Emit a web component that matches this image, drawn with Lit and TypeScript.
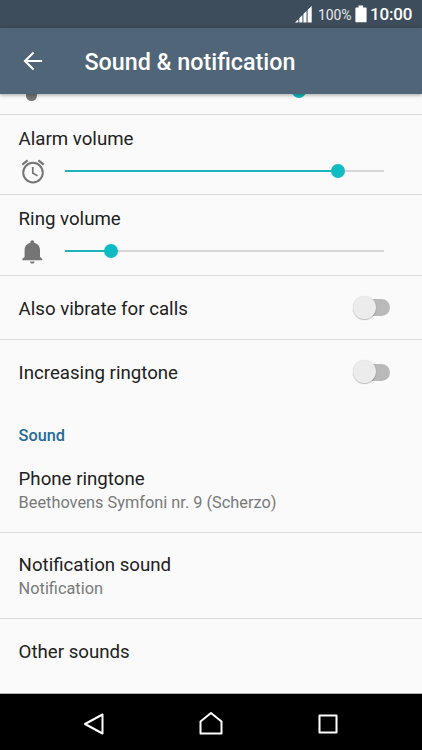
import { LitElement, html, css, svg } from "lit";
import { customElement, property } from "lit/decorators.js";

@customElement("volume-slider")
class VolumeSlider extends LitElement {
  @property({ type: Number }) value = 0;
  static styles = css`
    :host { display: block; width: 319px; height: 14px; }
    .wrap { position: relative; height: 14px; display: flex; align-items: center; }
    .track { width: 100%; height: 2px; background: #d6d6d6; }
    .fill { height: 2px; background: #1fb3bb; }
    .thumb { position: absolute; top: 0; width: 14px; height: 14px; margin-left: -7px; border-radius: 50%; background: #10bcc3; }
  `;
  render() {
    return html`<div class="wrap">
      <div class="track"><div class="fill" style="width:${this.value}%"></div></div>
      <div class="thumb" style="left:${this.value}%"></div>
    </div>`;
  }
}

@customElement("toggle-switch")
class ToggleSwitch extends LitElement {
  static styles = css`
    :host { display: block; width: 38px; height: 24px; }
    .wrap { position: relative; display: flex; align-items: center; justify-content: flex-end; height: 24px; }
    .bar { width: 32px; height: 17px; border-radius: 9px; background: #b9b9b9; }
    .knob { position: absolute; left: 1px; top: 0; width: 23px; height: 23px; border-radius: 50%; background: #ececec; box-shadow: 0 1px 1px rgba(0, 0, 0, 0.22), 0 0 1px rgba(0, 0, 0, 0.14); }
  `;
  render() {
    return html`<div class="wrap"><div class="bar"></div><div class="knob"></div></div>`;
  }
}

const alarmIcon = svg`
  <circle cx="14" cy="14.6" r="9.8" fill="none" stroke="#757575" stroke-width="2"/>
  <path d="M13.8 9v6l4.7 2.9" fill="none" stroke="#757575" stroke-width="1.7"/>
  <path d="M3.3 6.6L8.6 2.3M19.4 2.3L24.7 6.6" fill="none" stroke="#757575" stroke-width="2.2"/>`;

const bellIcon = svg`
  <path fill="#757575" d="M13.3 25.6c1.3 0 2.3-.9 2.3-2.1H11c0 1.2 1 2.1 2.3 2.1zM21 18.7v-6.8c0-3.7-2.3-6.3-5.8-7.2v-.6c0-1-.8-1.8-1.9-1.8s-1.900.8-1.900 1.8v.6c-3.500.9-5.800 3.500-5.800 7.200v6.800l-2.300 2.400v1.100h20v-1.100z"/>`;

@customElement("app-root")
class AppRoot extends LitElement {
  static styles = css`
    :host { display: block; width: 422px; height: 750px; overflow: hidden; background: #fafafa; font-family: Roboto, sans-serif; color: #212121; }
    * { box-sizing: border-box; }
    svg { display: block; flex: none; }
    .screen { display: flex; flex-direction: column; height: 750px; }
    .status { height: 28px; flex: none; background: #3e4d5b; display: flex; align-items: center; justify-content: flex-end; padding: 0 9px 0 0; color: #fff; }
    .percent { font-size: 14px; line-height: 28px; width: 33px; margin: 1px 4px 0 5px; color: #e6e9eb; letter-spacing: -0.15px; white-space: nowrap; }
    .clock { font-size: 17px; font-weight: 500; line-height: 28px; width: 43px; margin: 0 0 0 3px; letter-spacing: -0.2px; white-space: nowrap; }
    .header { height: 66px; flex: none; background: #506578; display: flex; align-items: center; padding-left: 19px; box-shadow: 0 1px 4px rgba(0, 0, 0, 0.36); position: relative; z-index: 1; }
    .title { margin: 2px 0 0 37.4px; font-size: 23.3px; font-weight: 500; line-height: 30px; color: #fff; white-space: nowrap; }
    .list { flex: 1; min-height: 0; display: flex; flex-direction: column; overflow: hidden; border-bottom: 1px solid #b5b5b5; }
    .row { flex: none; border-bottom: 1px solid #dadada; padding-left: 18.600px; }
    .partial { height: 21px; display: flex; align-items: flex-start; overflow: hidden; }
    .dot { width: 11px; height: 11px; border-radius: 50%; background: #757575; margin: -4px 36px 0 7px; }
    .partial volume-slider { margin-top: -10px; margin-left: -7px; }
    .volume { height: 80px; padding-top: 12px; }
    .ring { height: 81px; }
    .control { display: flex; align-items: center; height: 28px; margin-top: 7px; }
    .control svg { margin-top: -1px; }
    .control volume-slider { margin: -2px 0 0 18.800px; }
    .label { font-size: 18.680px; line-height: 24px; white-space: nowrap; }
    .toggle { height: 64px; display: flex; align-items: center; justify-content: space-between; padding-right: 32px; }
    .toggle .label { margin-top: 2px; }
    .last { border-bottom: none; }
    .section { flex: none; height: 22px; margin: 21px 0 0 18.600px; font-size: 16.3px; line-height: 22px; font-weight: 500; color: #266a98; }
    .sound { height: 86px; padding-top: 20px; }
    .other { padding-top: 21px; }
    .summary { font-size: 16.340px; line-height: 20px; margin-top: 2px; color: #797979; white-space: nowrap; }
    .nav { height: 56px; flex: none; background: #000; display: flex; align-items: center; justify-content: space-between; padding: 3px 79px 0 79px; }
    .nav svg { fill: none; stroke: #fff; stroke-width: 2; stroke-linejoin: round; }
  `;

  render() {
    return html`<div class="screen">
      <div class="status">
        <svg width="18" height="18" viewBox="0 0 18 18" fill="#fff"><path d="M0 17.5L3.3 14.3V17.5zM4.3 13.3L7.4 10.1V17.5H4.3zM8.4 9.1L11.5 6V17.5H8.4zM12.6 4.9L16.7 .8V17.5H12.6z"/></svg>
        <div class="percent">100%</div>
        <svg width="12" height="18" viewBox="0 0 12 18" fill="#fff"><path d="M3.5 .5h4.6v2H11q.6 0 .6.7v13.4q0 .7-.7.7H1.1q-.7 0-.7-.7V3.2q0-.7.7-.7h2.4z"/></svg>
        <div class="clock">10:00</div>
      </div>
      <div class="header">
        <svg width="28" height="28" viewBox="0 0 28 28" fill="none" stroke="#fff" stroke-width="2.1"><path d="M23.2 14H6.2M14.6 5.4L6 14l8.6 8.6"/></svg>
        <div class="title">Sound &amp; notification</div>
      </div>
      <div class="list">
        <div class="row partial"><div class="dot"></div><volume-slider .value=${73.2}></volume-slider></div>
        <div class="row volume">
          <div class="label">Alarm volume</div>
          <div class="control"><svg width="28" height="28" viewBox="0 0 28 28">${alarmIcon}</svg><volume-slider .value=${85.6}></volume-slider></div>
        </div>
        <div class="row volume ring">
          <div class="label">Ring volume</div>
          <div class="control"><svg width="28" height="28" viewBox="0 0 28 28">${bellIcon}</svg><volume-slider .value=${14.4}></volume-slider></div>
        </div>
        <div class="row toggle"><div class="label">Also vibrate for calls</div><toggle-switch></toggle-switch></div>
        <div class="row toggle last"><div class="label">Increasing ringtone</div><toggle-switch></toggle-switch></div>
        <div class="section">Sound</div>
        <div class="row sound"><div class="label">Phone ringtone</div><div class="summary">Beethovens Symfoni nr. 9 (Scherzo)</div></div>
        <div class="row sound"><div class="label">Notification sound</div><div class="summary">Notification</div></div>
        <div class="row sound other last"><div class="label">Other sounds</div></div>
      </div>
      <div class="nav">
        <svg width="30" height="30" viewBox="0 0 30 30"><path d="M23.5 5.5v19L6 15z"/></svg>
        <svg width="30" height="30" viewBox="0 0 30 30"><path d="M4.5 24.500V12.500L15 4l10.500 8.500v12z"/></svg>
        <svg width="30" height="30" viewBox="0 0 30 30"><path d="M6.500 6.500h17v17h-17z"/></svg>
      </div>
    </div>`;
  }
}
